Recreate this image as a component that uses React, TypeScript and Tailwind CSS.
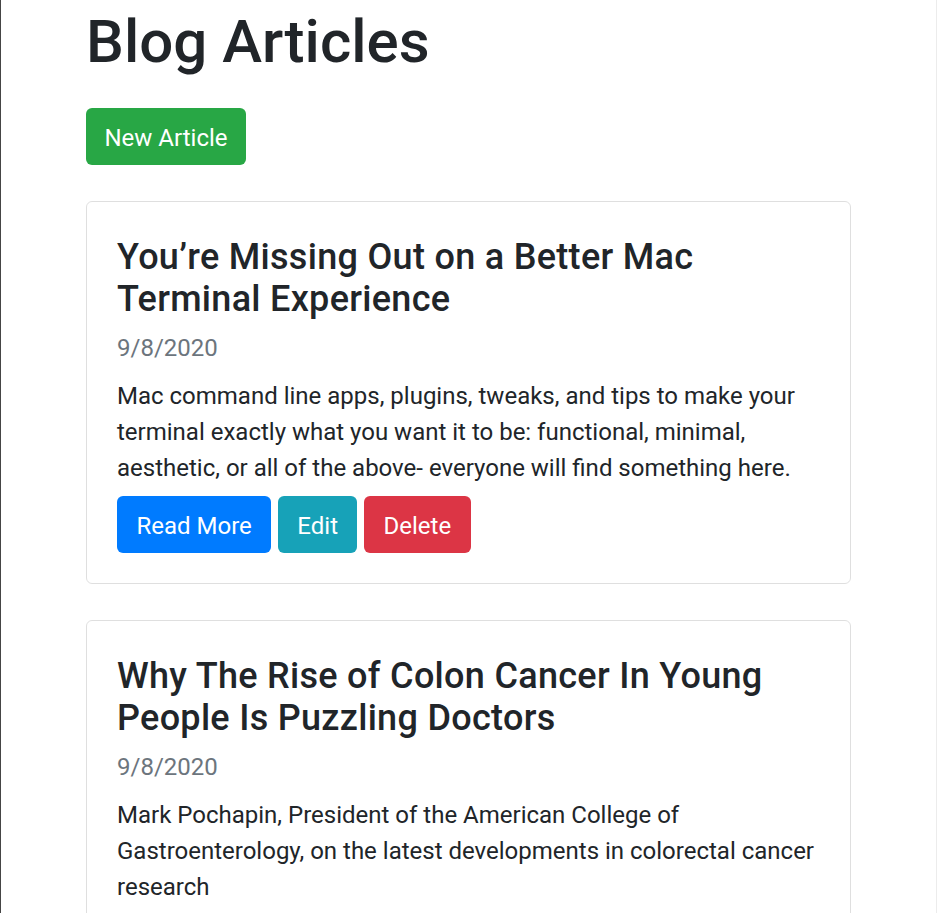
import React from "react";

const articles = [
  {
    title: "You’re Missing Out on a Better Mac Terminal Experience",
    date: "9/8/2020",
    body: "Mac command line apps, plugins, tweaks, and tips to make your terminal exactly what you want it to be: functional, minimal, aesthetic, or all of the above- everyone will find something here.",
  },
  {
    title: "Why The Rise of Colon Cancer In Young People Is Puzzling Doctors",
    date: "9/8/2020",
    body: "Mark Pochapin, President of the American College of Gastroenterology, on the latest developments in colorectal cancer research",
  },
];

export default function App() {
  return (
    <div
      className="min-h-screen bg-white border-l border-l-[#454545] border-r border-r-[#ececec] text-[#212529]"
      style={{ fontFamily: 'Roboto, "Noto Sans", sans-serif' }}
    >
      <div className="w-[765px] mx-auto">
        <h1 className="text-[60px] leading-[72px] font-medium pt-[6px] mb-[30px]">Blog Articles</h1>
        <button className="bg-[#28a745] text-white text-[24px] leading-[37px] px-[18.5px] pt-[12px] pb-[8px] rounded-[6px]">
          New Article
        </button>
        <div className="mt-[36px] flex flex-col gap-[36px]">
          {articles.map((a, i) => (
            <div key={i} className="border border-[rgba(0,0,0,0.125)] rounded-[6px] p-[30px]">
              <h4 className="text-[36px] leading-[42px] font-medium tracking-[0.3px] pt-[4px] mb-[10px]">{a.title}</h4>
              <div className="text-[24px] leading-[36px] text-[#6c757d] mb-[12px]">{a.date}</div>
              <p className="text-[24px] leading-[36px] mb-[10px]">{a.body}</p>
              <div className="flex gap-[7px]">
                <button className="bg-[#007bff] text-white text-[24px] leading-[37px] px-[19.5px] pt-[12px] pb-[8px] rounded-[6px]">Read More</button>
                <button className="bg-[#17a2b8] text-white text-[24px] leading-[37px] px-[19px] pt-[12px] pb-[8px] rounded-[6px]">Edit</button>
                <button className="bg-[#dc3545] text-white text-[24px] leading-[37px] px-[19.5px] pt-[12px] pb-[8px] rounded-[6px]">Delete</button>
              </div>
            </div>
          ))}
        </div>
      </div>
    </div>
  );
}
